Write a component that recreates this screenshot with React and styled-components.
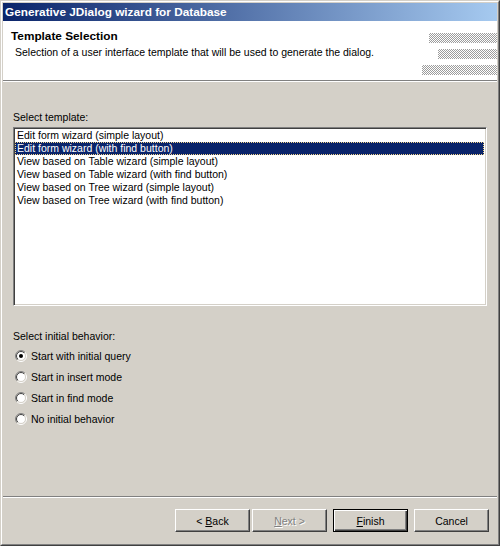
import React, { useId, useState } from "react";
import styled, { createGlobalStyle, css } from "styled-components";

const templates = [
  "Edit form wizard (simple layout)",
  "Edit form wizard (with find button)",
  "View based on Table wizard (simple layout)",
  "View based on Table wizard (with find button)",
  "View based on Tree wizard (simple layout)",
  "View based on Tree wizard (with find button)",
];

const behaviors = [
  "Start with initial query",
  "Start in insert mode",
  "Start in find mode",
  "No initial behavior",
];

const GlobalStyle = createGlobalStyle`
  html, body {
    margin: 0;
    padding: 0;
    background: #d4d0c8;
  }
  * {
    box-sizing: border-box;
  }
`;

// classic win2k radio button, drawn as two bevelled rings
const Radio = ({ checked }) => {
  const id = useId().replace(/:/g, "");
  return (
    <svg width="12" height="12" viewBox="0 0 12 12">
      <defs>
        <linearGradient id={`o${id}`} x1="0" y1="0" x2="1" y2="1">
          <stop offset="50%" stopColor="#808080" />
          <stop offset="50%" stopColor="#ffffff" />
        </linearGradient>
        <linearGradient id={`i${id}`} x1="0" y1="0" x2="1" y2="1">
          <stop offset="50%" stopColor="#404040" />
          <stop offset="50%" stopColor="#d4d0c8" />
        </linearGradient>
      </defs>
      <circle cx="6" cy="6" r="5.5" fill="none" stroke={`url(#o${id})`} />
      <circle cx="6" cy="6" r="4.5" fill="#fff" stroke={`url(#i${id})`} />
      {checked && <circle cx="6" cy="6" r="2" fill="#000" />}
    </svg>
  );
};

const App = () => {
  const [template, setTemplate] = useState(1);
  const [behavior, setBehavior] = useState(0);

  return (
    <>
      <GlobalStyle />
      <Frame>
        <Window>
          <TitleBar>Generative JDialog wizard for Database</TitleBar>
          <Header>
            <HeaderText>
              <PageTitle>Template Selection</PageTitle>
              <PageDesc>Selection of a user interface template that will be used to generate the dialog.</PageDesc>
            </HeaderText>
            <Banner>
              <Dither $w={68} />
              <Dither $w={59} />
              <Dither $w={75} />
            </Banner>
          </Header>
          <Separator />
          <Body>
            <Label>Select template:</Label>
            <ListBox>
              {templates.map((t, i) => (
                <ListItem key={t} $selected={template === i} onClick={() => setTemplate(i)}>
                  {t}
                </ListItem>
              ))}
            </ListBox>
            <Label $top={24}>Select initial behavior:</Label>
            <RadioGroup>
              {behaviors.map((b, i) => (
                <RadioRow key={b} onClick={() => setBehavior(i)}>
                  <Radio checked={behavior === i} />
                  <span>{b}</span>
                </RadioRow>
              ))}
            </RadioGroup>
          </Body>
          <Separator />
          <ButtonBar>
            <Button>
              &lt; <u>B</u>ack
            </Button>
            <Button disabled $gap={2}>
              <u>N</u>ext &gt;
            </Button>
            <Button $default $gap={6}>
              <u>F</u>inish
            </Button>
            <Button $gap={6}>Cancel</Button>
          </ButtonBar>
        </Window>
      </Frame>
    </>
  );
};

// Styled Components
const Frame = styled.div`
  width: 500px;
  height: 546px;
  border: 1px solid;
  border-color: #d4d0c8 #404040 #404040 #d4d0c8;
  font-family: "Liberation Sans", Arial, sans-serif;
  font-size: 10.5px;
  color: #000;
`;

const Window = styled.div`
  height: 100%;
  border: 1px solid;
  border-color: #ffffff #808080 #808080 #ffffff;
  padding: 1px;
  background: #d4d0c8;
  display: flex;
  flex-direction: column;
`;

const TitleBar = styled.div`
  height: 18px;
  flex: none;
  display: flex;
  align-items: center;
  padding-left: 2px;
  background: linear-gradient(90deg, #0a246a, #a6caf0);
  color: #fff;
  font-weight: bold;
  font-size: 11.8px;
`;

const Header = styled.div`
  height: 59px;
  flex: none;
  background: #fff;
  display: flex;
  justify-content: space-between;
`;

const HeaderText = styled.div`
  padding: 8px 0 0 8px;
  display: flex;
  flex-direction: column;
`;

const PageTitle = styled.div`
  font-weight: bold;
  font-size: 11.8px;
  line-height: 14px;
`;

const PageDesc = styled.div`
  margin-top: 3px;
  padding-left: 4px;
  line-height: 13px;
`;

const Banner = styled.div`
  padding-top: 12px;
  display: flex;
  flex-direction: column;
  align-items: flex-end;
  gap: 6px;
`;

const Dither = styled.div`
  width: ${(p) => p.$w}px;
  height: 10px;
  background: repeating-conic-gradient(#9c9c9c 0 25%, #ffffff 0 50%) 0 0 / 2px 2px;
`;

const Separator = styled.div`
  height: 2px;
  flex: none;
  border-top: 1px solid #808080;
  border-bottom: 1px solid #ffffff;
`;

const Body = styled.div`
  flex: 1;
  padding: 29px 10px 0 10px;
  display: flex;
  flex-direction: column;
`;

const Label = styled.div`
  line-height: 13px;
  margin-top: ${(p) => p.$top || 0}px;
`;

const ListBox = styled.div`
  margin-top: 3px;
  height: 179px;
  background: #fff;
  border: 1px solid;
  border-color: #808080 #ffffff #ffffff #808080;
  box-shadow: inset 1px 1px #404040, inset -1px -1px #d4d0c8;
  padding: 1px 2px 1px 1px;
`;

const ListItem = styled.div`
  height: 13px;
  line-height: 13px;
  padding-left: 2px;
  white-space: nowrap;
  cursor: default;

  ${(p) =>
    p.$selected &&
    css`
      background: #0a246a;
      color: #fff;
      outline: 1px dotted #f2d58a;
      outline-offset: -1px;
    `}
`;

const RadioGroup = styled.div`
  margin-top: 2px;
  display: flex;
  flex-direction: column;
`;

const RadioRow = styled.div`
  height: 21px;
  display: flex;
  align-items: center;
  gap: 4px;
  padding-left: 2px;
  cursor: default;

  svg {
    flex: none;
  }
`;

const ButtonBar = styled.div`
  height: 45px;
  flex: none;
  display: flex;
  align-items: center;
  justify-content: flex-end;
  padding-right: 8px;
`;

const Button = styled.button`
  width: 75px;
  height: 23px;
  margin-left: ${(p) => p.$gap || 0}px;
  padding: 0;
  background: #d4d0c8;
  font-family: inherit;
  font-size: 10.5px;
  color: #000;
  border: 1px solid;
  border-color: #ffffff #404040 #404040 #ffffff;
  box-shadow: inset -1px -1px #808080;
  border-radius: 0;

  u {
    text-decoration-thickness: 1px;
    text-underline-offset: 1px;
  }

  &:disabled {
    color: #808080;
    text-shadow: 1px 1px #ffffff;
  }

  ${(p) =>
    p.$default &&
    css`
      border: 1px solid #000;
      box-shadow: inset 1px 1px #ffffff, inset -1px -1px #404040, inset -2px -2px #808080;
    `}
`;

export default App;
